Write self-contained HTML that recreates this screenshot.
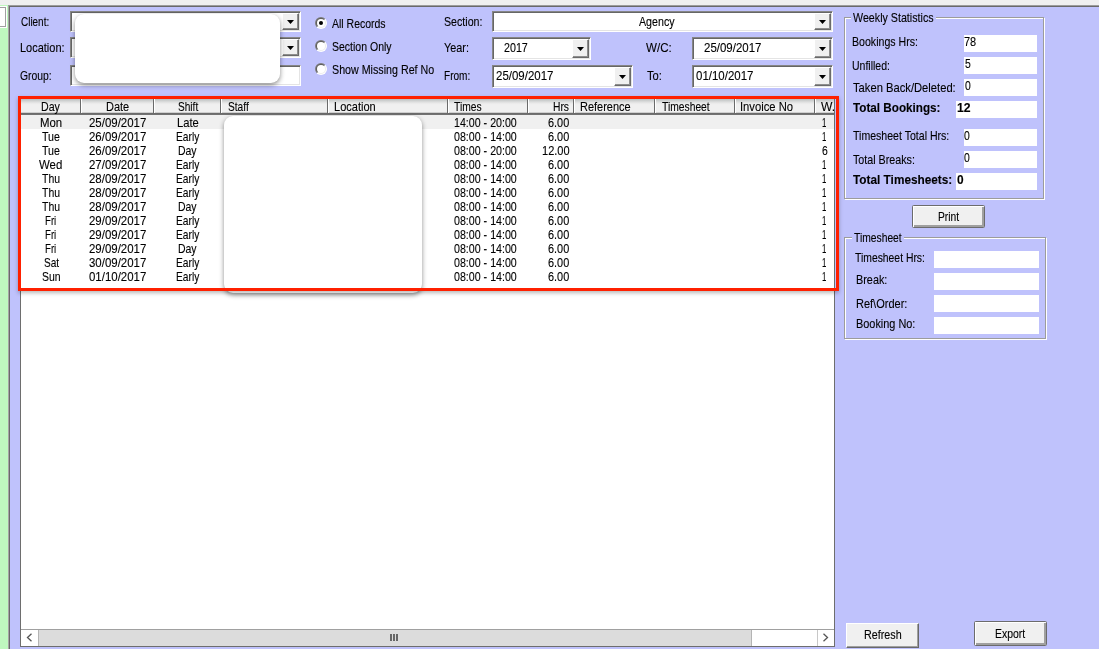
<!DOCTYPE html>
<html lang="en"><head><meta charset="utf-8"><title>Timesheet Bookings</title>
<style>
html,body{margin:0;padding:0}
body{position:relative;width:1099px;height:649px;overflow:hidden;background:#bfc2fc;font-family:"Liberation Sans",sans-serif;font-size:13px;color:#000}
div,span,i,b{position:absolute;box-sizing:border-box;display:block}
.t{-webkit-text-stroke:.12px #000;white-space:pre;line-height:16px;height:16px;font-size:13px;transform-origin:0 0;font-weight:normal}
.t.b{font-weight:bold}
#topband{left:0;top:0;width:1099px;height:5px;background:#f0f0f0}
#hline{left:8px;top:5px;width:1091px;height:2px;background:linear-gradient(#9c9c9c 0,#9c9c9c 1px,#6a6a6a 1px,#6a6a6a 2px)}
#green{left:0;top:5px;width:8px;height:644px;background:#bff8bf}
#vline{left:8px;top:6px;width:2px;height:643px;background:linear-gradient(90deg,#a6a6a6 0,#a6a6a6 1px,#6a6a6a 1px,#6a6a6a 2px)}
#wbox{left:-2px;top:6px;width:9px;height:22px;background:#fff;border:1px solid #fff;box-shadow:inset 0 0 0 1px #a0a0a0}
.combo,.tbox{background:#fff;border:1px solid;border-color:#868686 #fff #fff #868686;box-shadow:inset 1px 1px 0 #666,inset -1px -1px 0 #e4e4e4}
.combo b{right:1px;top:1px;bottom:1px;width:17px;background:#f0f0f0;border:1px solid;border-color:#fff #6a6a6a #6a6a6a #fff;box-shadow:inset -1px -1px 0 #8e8e8e}
.combo b i{left:4px;top:6px;width:7px;height:4px;background:#000;clip-path:polygon(0 0,100% 0,50% 100%)}
.combo.tall b i{top:7px}
.radio{width:12px;height:12px;border-radius:50%;background:linear-gradient(135deg,#787878 0,#808080 46%,#fff 54%,#fff 100%)}
.radio:before{content:"";position:absolute;left:1px;top:1px;width:10px;height:10px;border-radius:50%;background:linear-gradient(135deg,#5a5a5a 0,#606060 46%,#ececec 54%,#ececec 100%)}
.radio i{left:2px;top:2px;width:8px;height:8px;border-radius:50%;background:#fff}
.radio.on i:after{content:"";position:absolute;left:2px;top:2px;width:4px;height:4px;border-radius:50%;background:#000}
.fs{border:1px solid #9c9c9c;box-shadow:1px 1px 0 #fff,inset 1px 1px 0 #fff}
.lg{background:#bfc2fc;height:6px}
.wb{background:#fff}
.btn{background:#f0f0f0;border:1px solid;border-color:#fff #696969 #696969 #fff;box-shadow:inset -1px -1px 0 #a0a0a0}
.btn.o{border-color:#6c6c6c;border-radius:1.5px;box-shadow:inset 1px 1px 0 #fff,inset -1px -1px 0 #a0a0a0,inset -2px -2px 0 #a0a0a0}
#list{left:20px;top:97px;width:815px;overflow:hidden;height:550px;background:#fff;border:1px solid #6e6e6e}
#hdr{left:0;top:1px;width:813px;height:16px;background:linear-gradient(#bbbfbf 0,#c6c9c9 1px,#d2d4d4 2px,#dddede 3px,#e7e7e7 4px,#eee 5px,#f0f0f0 6px,#f0f0f0 12.5px,#cfcfcf 13.5px,#6c6c6c 14px,#6a6a6a 15px,#7a7a7a 16px)}
.hc{top:0;height:14px;border-right:1px solid #6a6a6a;box-shadow:1px 0 0 #fff}
#sel{left:0;top:17px;width:813px;height:14px;background:#f0f0f0}
#hs{left:0;top:531px;width:813px;height:17px;background:#fff;border-top:1px solid #a0a0a0}
#thumb{left:17px;top:0;width:714px;height:16px;background:#dcdcdc;border-left:1px solid #b4b4b4;border-right:1px solid #b4b4b4}
.grip{top:4px;width:2px;height:7px;background:#666}
#red{left:18px;top:96px;width:821px;height:195px;border:3px solid #ff2000;box-shadow:0 2px 4px rgba(0,0,0,.28)}
.ov{background:#fff;border-radius:9px;box-shadow:0 2px 5px rgba(0,0,0,.45)}
#txt{left:0;top:0;width:1099px;height:649px;will-change:transform}

</style></head><body>
<div id="topband"></div>
<div id="green"></div>
<div id="hline"></div>
<div id="vline"></div>
<div id="wbox"></div>

<div class="combo" style="left:70px;top:11px;width:231px;height:21px"><b><i></i></b></div>
<div class="combo" style="left:70px;top:37px;width:231px;height:21px"><b><i></i></b></div>
<div class="tbox" style="left:70px;top:65px;width:231px;height:21px"></div>
<div class="ov" style="left:75px;top:14px;width:205px;height:69px"></div>

<div class="radio on" style="left:315px;top:17px"><i></i></div>
<div class="radio" style="left:315px;top:40px"><i></i></div>
<div class="radio" style="left:315px;top:63px"><i></i></div>

<div class="combo" style="left:492px;top:11px;width:341px;height:21px"><b><i></i></b></div>
<div class="combo tall" style="left:492px;top:37px;width:99px;height:23px"><b><i></i></b></div>
<div class="combo tall" style="left:492px;top:65px;width:141px;height:23px"><b><i></i></b></div>
<div class="combo tall" style="left:692px;top:37px;width:141px;height:23px"><b><i></i></b></div>
<div class="combo tall" style="left:692px;top:65px;width:141px;height:23px"><b><i></i></b></div>

<div id="list">
  <div id="hdr">
    <div class="hc" style="left:0;width:60px"></div>
    <div class="hc" style="left:61px;width:72px"></div>
    <div class="hc" style="left:134px;width:66px"></div>
    <div class="hc" style="left:201px;width:106px"></div>
    <div class="hc" style="left:308px;width:119px"></div>
    <div class="hc" style="left:428px;width:79px"></div>
    <div class="hc" style="left:508px;width:45px"></div>
    <div class="hc" style="left:554px;width:80px"></div>
    <div class="hc" style="left:635px;width:79px"></div>
    <div class="hc" style="left:715px;width:79px"></div>
    
  </div>
  <div id="sel"></div>
  <div class="ov" style="left:203px;top:18px;width:198px;height:177px"></div>
  <div id="hs">
    <div id="thumb"></div>
    <div class="grip" style="left:369px"></div>
    <div class="grip" style="left:372px"></div>
    <div class="grip" style="left:375px"></div>
    <svg style="position:absolute;left:5px;top:3px" width="7" height="9" viewBox="0 0 7 9"><path d="M5.5 .8 L1.5 4.5 L5.5 8.2" fill="none" stroke="#555" stroke-width="1.3"/></svg>
    <div style="left:796px;top:0;width:1px;height:16px;background:#c8c8c8"></div>
    <svg style="position:absolute;left:801px;top:3px" width="7" height="9" viewBox="0 0 7 9"><path d="M1.5 .8 L5.5 4.5 L1.5 8.2" fill="none" stroke="#555" stroke-width="1.3"/></svg>
  </div>
</div>
<div id="red"></div>

<div class="fs" style="left:844px;top:17px;width:200px;height:182px"></div>
<div class="lg" style="left:851px;top:15px;width:85px"></div>
<div class="wb" style="left:964px;top:35px;width:73px;height:17px"></div>
<div class="wb" style="left:964px;top:57px;width:73px;height:17px"></div>
<div class="wb" style="left:964px;top:79px;width:73px;height:17px"></div>
<div class="wb" style="left:956px;top:101px;width:81px;height:17px"></div>
<div class="wb" style="left:964px;top:129px;width:73px;height:17px"></div>
<div class="wb" style="left:964px;top:151px;width:73px;height:17px"></div>
<div class="wb" style="left:956px;top:173px;width:81px;height:17px"></div>

<div class="btn o" style="left:912px;top:205px;width:73px;height:23px"></div>

<div class="fs" style="left:844px;top:237px;width:202px;height:102px"></div>
<div class="lg" style="left:852px;top:235px;width:52px"></div>
<div class="wb" style="left:934px;top:251px;width:105px;height:17px"></div>
<div class="wb" style="left:934px;top:273px;width:105px;height:17px"></div>
<div class="wb" style="left:934px;top:295px;width:105px;height:17px"></div>
<div class="wb" style="left:934px;top:317px;width:105px;height:17px"></div>

<div class="btn" style="left:846px;top:623px;width:73px;height:25px"></div>
<div class="btn o" style="left:974px;top:621px;width:73px;height:25px"></div>

<div id="txt">
<span class="t" style="left:20.60px;top:14.00px;transform:scaleX(0.7644)">Client:</span>
<span class="t" style="left:19.56px;top:40.00px;transform:scaleX(0.8446)">Location:</span>
<span class="t" style="left:20.40px;top:68.00px;transform:scaleX(0.7973)">Group:</span>
<span class="t" style="left:332.00px;top:16.00px;transform:scaleX(0.8064)">All Records</span>
<span class="t" style="left:332.00px;top:39.00px;transform:scaleX(0.8086)">Section Only</span>
<span class="t" style="left:332.00px;top:62.00px;transform:scaleX(0.8223)">Show Missing Ref No</span>
<span class="t" style="left:444.40px;top:14.00px;transform:scaleX(0.8197)">Section:</span>
<span class="t" style="left:443.60px;top:40.00px;transform:scaleX(0.8337)">Year:</span>
<span class="t" style="left:443.63px;top:68.00px;transform:scaleX(0.7733)">From:</span>
<span class="t" style="left:639.00px;top:14.00px;transform:scaleX(0.8208)">Agency</span>
<span class="t" style="left:504.40px;top:40.00px;transform:scaleX(0.8226)">2017</span>
<span class="t" style="left:496.40px;top:68.00px;transform:scaleX(0.8823)">25/09/2017</span>
<span class="t" style="left:646.40px;top:40.00px;transform:scaleX(0.8914)">W/C:</span>
<span class="t" style="left:704.40px;top:40.00px;transform:scaleX(0.8823)">25/09/2017</span>
<span class="t" style="left:647.00px;top:68.00px;transform:scaleX(0.8607)">To:</span>
<span class="t" style="left:696.40px;top:68.00px;transform:scaleX(0.8823)">01/10/2017</span>
<span class="t" style="left:40.68px;top:99.00px;transform:scaleX(0.8179)">Day</span>
<span class="t" style="left:105.55px;top:99.00px;transform:scaleX(0.8464)">Date</span>
<span class="t" style="left:177.70px;top:99.00px;transform:scaleX(0.7765)">Shift</span>
<span class="t" style="left:227.60px;top:99.00px;transform:scaleX(0.7810)">Staff</span>
<span class="t" style="left:333.55px;top:99.00px;transform:scaleX(0.8472)">Location</span>
<span class="t" style="left:454.40px;top:99.00px;transform:scaleX(0.7908)">Times</span>
<span class="t" style="left:552.61px;top:99.00px;transform:scaleX(0.7912)">Hrs</span>
<span class="t" style="left:580.16px;top:99.00px;transform:scaleX(0.8443)">Reference</span>
<span class="t" style="left:662.00px;top:99.00px;transform:scaleX(0.7921)">Timesheet</span>
<span class="t" style="left:740.14px;top:99.00px;transform:scaleX(0.8639)">Invoice No</span>
<span class="t" style="left:39.52px;top:115.00px;transform:scaleX(0.8770)">Mon</span>
<span class="t" style="left:88.80px;top:115.00px;transform:scaleX(0.8807)">25/09/2017</span>
<span class="t" style="left:176.54px;top:115.00px;transform:scaleX(0.8641)">Late</span>
<span class="t" style="left:454.40px;top:115.00px;transform:scaleX(0.8195)">14:00 - 20:00</span>
<span class="t" style="left:548.00px;top:115.00px;transform:scaleX(0.8376)">6.00</span>
<span class="t" style="left:821.60px;top:115.00px;transform:scaleX(0.6000)">1</span>
<span class="t" style="left:42.20px;top:129.00px;transform:scaleX(0.8207)">Tue</span>
<span class="t" style="left:88.80px;top:129.00px;transform:scaleX(0.8807)">26/09/2017</span>
<span class="t" style="left:175.71px;top:129.00px;transform:scaleX(0.7865)">Early</span>
<span class="t" style="left:454.40px;top:129.00px;transform:scaleX(0.8195)">08:00 - 14:00</span>
<span class="t" style="left:548.00px;top:129.00px;transform:scaleX(0.8376)">6.00</span>
<span class="t" style="left:821.60px;top:129.00px;transform:scaleX(0.6000)">1</span>
<span class="t" style="left:42.20px;top:143.00px;transform:scaleX(0.8207)">Tue</span>
<span class="t" style="left:88.80px;top:143.00px;transform:scaleX(0.8807)">26/09/2017</span>
<span class="t" style="left:177.90px;top:143.00px;transform:scaleX(0.8047)">Day</span>
<span class="t" style="left:454.40px;top:143.00px;transform:scaleX(0.8195)">08:00 - 20:00</span>
<span class="t" style="left:542.00px;top:143.00px;transform:scaleX(0.8483)">12.00</span>
<span class="t" style="left:821.60px;top:143.00px;transform:scaleX(0.8000)">6</span>
<span class="t" style="left:39.10px;top:157.00px;transform:scaleX(0.8795)">Wed</span>
<span class="t" style="left:88.80px;top:157.00px;transform:scaleX(0.8807)">27/09/2017</span>
<span class="t" style="left:175.71px;top:157.00px;transform:scaleX(0.7865)">Early</span>
<span class="t" style="left:454.40px;top:157.00px;transform:scaleX(0.8195)">08:00 - 14:00</span>
<span class="t" style="left:548.00px;top:157.00px;transform:scaleX(0.8376)">6.00</span>
<span class="t" style="left:821.60px;top:157.00px;transform:scaleX(0.6000)">1</span>
<span class="t" style="left:42.20px;top:171.00px;transform:scaleX(0.8029)">Thu</span>
<span class="t" style="left:88.80px;top:171.00px;transform:scaleX(0.8807)">28/09/2017</span>
<span class="t" style="left:175.71px;top:171.00px;transform:scaleX(0.7865)">Early</span>
<span class="t" style="left:454.40px;top:171.00px;transform:scaleX(0.8195)">08:00 - 14:00</span>
<span class="t" style="left:548.00px;top:171.00px;transform:scaleX(0.8376)">6.00</span>
<span class="t" style="left:821.60px;top:171.00px;transform:scaleX(0.6000)">1</span>
<span class="t" style="left:42.20px;top:185.00px;transform:scaleX(0.8029)">Thu</span>
<span class="t" style="left:88.80px;top:185.00px;transform:scaleX(0.8807)">28/09/2017</span>
<span class="t" style="left:175.71px;top:185.00px;transform:scaleX(0.7865)">Early</span>
<span class="t" style="left:454.40px;top:185.00px;transform:scaleX(0.8195)">08:00 - 14:00</span>
<span class="t" style="left:548.00px;top:185.00px;transform:scaleX(0.8376)">6.00</span>
<span class="t" style="left:821.60px;top:185.00px;transform:scaleX(0.6000)">1</span>
<span class="t" style="left:42.20px;top:199.00px;transform:scaleX(0.8029)">Thu</span>
<span class="t" style="left:88.80px;top:199.00px;transform:scaleX(0.8807)">28/09/2017</span>
<span class="t" style="left:177.90px;top:199.00px;transform:scaleX(0.8047)">Day</span>
<span class="t" style="left:454.40px;top:199.00px;transform:scaleX(0.8195)">08:00 - 14:00</span>
<span class="t" style="left:548.00px;top:199.00px;transform:scaleX(0.8376)">6.00</span>
<span class="t" style="left:821.60px;top:199.00px;transform:scaleX(0.6000)">1</span>
<span class="t" style="left:45.06px;top:213.00px;transform:scaleX(0.7428)">Fri</span>
<span class="t" style="left:88.80px;top:213.00px;transform:scaleX(0.8807)">29/09/2017</span>
<span class="t" style="left:175.71px;top:213.00px;transform:scaleX(0.7865)">Early</span>
<span class="t" style="left:454.40px;top:213.00px;transform:scaleX(0.8195)">08:00 - 14:00</span>
<span class="t" style="left:548.00px;top:213.00px;transform:scaleX(0.8376)">6.00</span>
<span class="t" style="left:821.60px;top:213.00px;transform:scaleX(0.6000)">1</span>
<span class="t" style="left:45.06px;top:227.00px;transform:scaleX(0.7428)">Fri</span>
<span class="t" style="left:88.80px;top:227.00px;transform:scaleX(0.8807)">29/09/2017</span>
<span class="t" style="left:175.71px;top:227.00px;transform:scaleX(0.7865)">Early</span>
<span class="t" style="left:454.40px;top:227.00px;transform:scaleX(0.8195)">08:00 - 14:00</span>
<span class="t" style="left:548.00px;top:227.00px;transform:scaleX(0.8376)">6.00</span>
<span class="t" style="left:821.60px;top:227.00px;transform:scaleX(0.6000)">1</span>
<span class="t" style="left:45.06px;top:241.00px;transform:scaleX(0.7428)">Fri</span>
<span class="t" style="left:88.80px;top:241.00px;transform:scaleX(0.8807)">29/09/2017</span>
<span class="t" style="left:177.90px;top:241.00px;transform:scaleX(0.8047)">Day</span>
<span class="t" style="left:454.40px;top:241.00px;transform:scaleX(0.8195)">08:00 - 14:00</span>
<span class="t" style="left:548.00px;top:241.00px;transform:scaleX(0.8376)">6.00</span>
<span class="t" style="left:821.60px;top:241.00px;transform:scaleX(0.6000)">1</span>
<span class="t" style="left:43.70px;top:255.00px;transform:scaleX(0.7738)">Sat</span>
<span class="t" style="left:88.80px;top:255.00px;transform:scaleX(0.8807)">30/09/2017</span>
<span class="t" style="left:175.71px;top:255.00px;transform:scaleX(0.7865)">Early</span>
<span class="t" style="left:454.40px;top:255.00px;transform:scaleX(0.8195)">08:00 - 14:00</span>
<span class="t" style="left:548.00px;top:255.00px;transform:scaleX(0.8376)">6.00</span>
<span class="t" style="left:821.60px;top:255.00px;transform:scaleX(0.6000)">1</span>
<span class="t" style="left:41.80px;top:269.00px;transform:scaleX(0.8035)">Sun</span>
<span class="t" style="left:88.80px;top:269.00px;transform:scaleX(0.8807)">01/10/2017</span>
<span class="t" style="left:175.71px;top:269.00px;transform:scaleX(0.7865)">Early</span>
<span class="t" style="left:454.40px;top:269.00px;transform:scaleX(0.8195)">08:00 - 14:00</span>
<span class="t" style="left:548.00px;top:269.00px;transform:scaleX(0.8376)">6.00</span>
<span class="t" style="left:821.60px;top:269.00px;transform:scaleX(0.6000)">1</span>
<span class="t" style="left:853.00px;top:10.00px;transform:scaleX(0.8223)">Weekly Statistics</span>
<span class="t" style="left:851.59px;top:34.00px;transform:scaleX(0.8145)">Bookings Hrs:</span>
<span class="t" style="left:964.40px;top:34.00px;transform:scaleX(0.8433)">78</span>
<span class="t" style="left:851.59px;top:58.00px;transform:scaleX(0.8070)">Unfilled:</span>
<span class="t" style="left:964.80px;top:56.00px;transform:scaleX(0.8000)">5</span>
<span class="t" style="left:852.80px;top:80.00px;transform:scaleX(0.8616)">Taken Back/Deleted:</span>
<span class="t" style="left:964.60px;top:78.00px;transform:scaleX(0.8000)">0</span>
<span class="t b" style="left:852.80px;top:100.00px;transform:scaleX(0.8997)">Total Bookings:</span>
<span class="t b" style="left:957.00px;top:100.00px;transform:scaleX(0.9417)">12</span>
<span class="t" style="left:853.00px;top:128.00px;transform:scaleX(0.8128)">Timesheet Total Hrs:</span>
<span class="t" style="left:964.40px;top:128.00px;transform:scaleX(0.8000)">0</span>
<span class="t" style="left:853.00px;top:152.00px;transform:scaleX(0.8238)">Total Breaks:</span>
<span class="t" style="left:964.40px;top:150.00px;transform:scaleX(0.8000)">0</span>
<span class="t b" style="left:853.00px;top:172.00px;transform:scaleX(0.9083)">Total Timesheets:</span>
<span class="t b" style="left:956.60px;top:172.00px;transform:scaleX(0.9143)">0</span>
<span class="t" style="left:937.61px;top:209.00px;transform:scaleX(0.7887)">Print</span>
<span class="t" style="left:854.00px;top:230.00px;transform:scaleX(0.7921)">Timesheet</span>
<span class="t" style="left:855.00px;top:250.00px;transform:scaleX(0.7974)">Timesheet Hrs:</span>
<span class="t" style="left:855.57px;top:272.00px;transform:scaleX(0.8343)">Break:</span>
<span class="t" style="left:855.55px;top:296.00px;transform:scaleX(0.8464)">Ref\Order:</span>
<span class="t" style="left:855.56px;top:316.00px;transform:scaleX(0.8380)">Booking No:</span>
<span class="t" style="left:863.77px;top:627.00px;transform:scaleX(0.8286)">Refresh</span>
<span class="t" style="left:994.90px;top:626.00px;transform:scaleX(0.8036)">Export</span>
<div style="left:816px;top:99px;width:18px;height:16px;overflow:hidden"><span class="t" style="left:4.5px;top:0;transform:scaleX(.93)">W.</span></div>
</div>
</body></html>
